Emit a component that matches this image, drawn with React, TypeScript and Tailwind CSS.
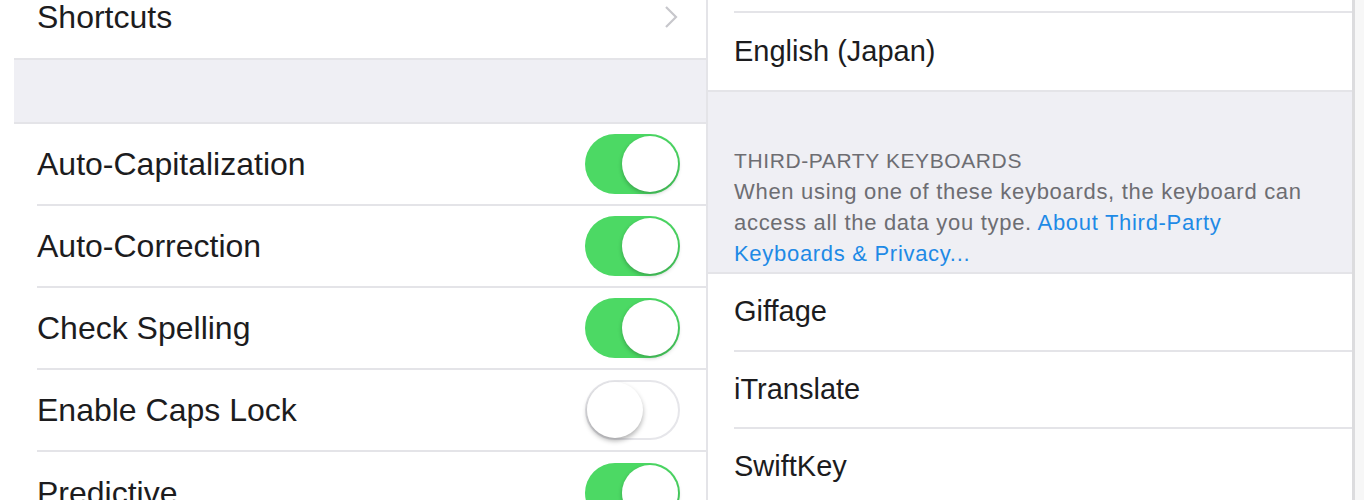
const font = { fontFamily: '"Liberation Sans", Arial, sans-serif' };

function Toggle({ on }: { on: boolean }) {
  if (on) {
    return (
      <div className="flex h-[60px] w-[95px] items-center justify-end rounded-full bg-[#4cd964] p-[2px]">
        <div className="h-[56px] w-[56px] rounded-full bg-white shadow-[0_2px_4px_rgba(0,0,0,0.25)]" />
      </div>
    );
  }
  return (
    <div className="flex h-[60px] w-[95px] items-center justify-start rounded-full border-2 border-[#e6e6ea] bg-white">
      <div className="h-[56px] w-[56px] rounded-full bg-white shadow-[0_3px_5px_rgba(0,0,0,0.3)]" />
    </div>
  );
}

function ToggleRow({ label, on, last }: { label: string; on: boolean; last?: boolean }) {
  return (
    <div className="flex h-[82px] shrink-0 flex-col pl-[37px]">
      <div className="flex flex-1 items-center justify-between pr-[26px]">
        <span className="text-[32px] text-[#1c1c1e]">{label}</span>
        <Toggle on={on} />
      </div>
      {!last && <div className="h-[2px] bg-[#e4e4e8]" />}
    </div>
  );
}

function KeyboardRow({ label }: { label: string }) {
  return (
    <div className="flex h-[77.5px] shrink-0 flex-col pl-[26px]">
      <div className="flex flex-1 items-center">
        <span className="text-[29px] text-[#1c1c1e]">{label}</span>
      </div>
      <div className="h-[2px] bg-[#e4e4e8]" />
    </div>
  );
}

export default function App() {
  return (
    <div className="flex h-[500px] w-[1364px] overflow-hidden bg-white" style={font}>
      {/* left: keyboard options */}
      <div className="flex w-[708px] shrink-0 flex-col border-r-2 border-[#e4e4e8]">
        <div className="-mt-[24px] flex h-[82px] shrink-0 items-center justify-between pl-[37px] pr-[26px]">
          <span className="text-[32px] text-[#1c1c1e]">Shortcuts</span>
          <svg width="14" height="24" viewBox="0 0 14 24" fill="none" className="mr-[2px]">
            <path d="M2 2l10 10-10 10" stroke="#c7c7cc" strokeWidth="2.2" />
          </svg>
        </div>
        <div className="ml-[14px] h-[66px] shrink-0 border-y-2 border-[#e4e4e8] bg-[#efeff4]" />
        <ToggleRow label="Auto-Capitalization" on />
        <ToggleRow label="Auto-Correction" on />
        <ToggleRow label="Check Spelling" on />
        <ToggleRow label="Enable Caps Lock" on={false} />
        <ToggleRow label="Predictive" on last />
      </div>

      {/* right: keyboards list */}
      <div className="flex w-[647px] shrink-0 flex-col border-r-[3px] border-[#dcdcde]">
        <div className="h-[13px] shrink-0 pl-[26px]">
          <div className="mt-[11px] h-[2px] bg-[#e4e4e8]" />
        </div>
        <div className="flex h-[77px] shrink-0 items-center pl-[26px]">
          <span className="text-[29px] text-[#1c1c1e]">English (Japan)</span>
        </div>
        <div className="shrink-0 border-y-2 border-[#e4e4e8] bg-[#efeff4] pb-[3px] pl-[26px] pr-[44px] pt-[53px]">
          <div className="text-[21px] leading-[31px] tracking-[0.6px] text-[#6d6d72]">THIRD-PARTY KEYBOARDS</div>
          <div className="text-[22px] leading-[31px] tracking-[0.7px] text-[#6d6d72]">
            When using one of these keyboards, the keyboard can access all the data you type.{" "}
            <span className="text-[#1e8ae6]">About Third-Party Keyboards &amp; Privacy...</span>
          </div>
        </div>
        <KeyboardRow label="Giffage" />
        <KeyboardRow label="iTranslate" />
        <KeyboardRow label="SwiftKey" />
      </div>

      <div className="flex-1 bg-[#f7f7f7]" />
    </div>
  );
}
